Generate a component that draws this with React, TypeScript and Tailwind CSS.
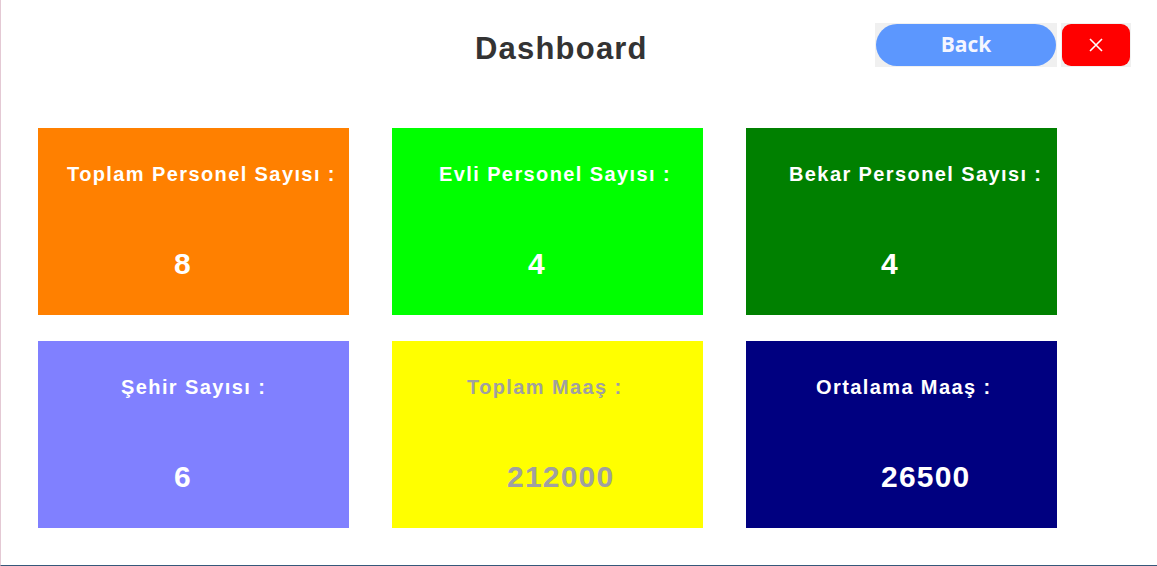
import React from "react";

type CardProps = {
  label: string;
  value: string;
  bg: string;
  text: string;
  labelPad: string;
  valuePad: string;
};

function StatCard({ label, value, bg, text, labelPad, valuePad }: CardProps) {
  return (
    <div className={`h-[187px] flex flex-col pt-[34px] ${bg} ${text}`}>
      <div className={`text-[20px] leading-[24px] font-bold tracking-[1.4px] whitespace-nowrap ${labelPad}`}>
        {label}
      </div>
      <div className={`mt-[60px] text-[30px] leading-[36px] font-bold tracking-[1.2px] ${valuePad}`}>
        {value}
      </div>
    </div>
  );
}

export default function App() {
  const cards: CardProps[] = [
    { label: "Toplam Personel Sayısı :", value: "8", bg: "bg-[#ff8000]", text: "text-white", labelPad: "pl-[29px]", valuePad: "pl-[136px]" },
    { label: "Evli Personel Sayısı :", value: "4", bg: "bg-[#00ff00]", text: "text-white", labelPad: "pl-[47px]", valuePad: "pl-[136px]" },
    { label: "Bekar Personel Sayısı :", value: "4", bg: "bg-[#008000]", text: "text-white", labelPad: "pl-[43px]", valuePad: "pl-[135px]" },
    { label: "Şehir Sayısı :", value: "6", bg: "bg-[#8080ff]", text: "text-white", labelPad: "pl-[83px]", valuePad: "pl-[136px]" },
    { label: "Toplam Maaş :", value: "212000", bg: "bg-[#ffff00]", text: "text-[#a0a0a0]", labelPad: "pl-[75px]", valuePad: "pl-[115px]" },
    { label: "Ortalama Maaş :", value: "26500", bg: "bg-[#000080]", text: "text-white", labelPad: "pl-[70px]", valuePad: "pl-[135px]" },
  ];

  return (
    <div
      className="w-[1157px] h-[566px] bg-white border-l border-l-[#e4c9d4] border-b border-b-[#36587a] flex flex-col overflow-hidden"
      style={{ fontFamily: '"Liberation Sans", Arial, sans-serif' }}
    >
      {/* header */}
      <div className="h-[128px] flex items-start">
        <h1 className="ml-[474px] mt-[31px] text-[31px] leading-[36px] font-bold text-[#333333] tracking-[1.2px]">
          Dashboard
        </h1>
        <div className="ml-auto mr-[26px] mt-[23px] flex gap-[4px]">
          <div className="bg-[#f0f0f0] p-[1px] w-[182px] h-[44px]">
            <button
              className="w-full h-full rounded-full bg-[#5c97fe] text-[#f4f6ff] text-[21px] font-bold flex items-center justify-center"
              style={{ fontFamily: '"Open Sans", "Noto Sans", sans-serif' }}
            >
              Back
            </button>
          </div>
          <div className="bg-[#f0f0f0] p-[1px] w-[70px] h-[44px]">
            <button className="w-full h-full rounded-[9px] bg-[#ff0000] flex items-center justify-center">
              <svg width="14" height="14" viewBox="0 0 14 14">
                <path d="M1 1 L13 13 M13 1 L1 13" stroke="#ffffff" strokeWidth="1.6" fill="none" />
              </svg>
            </button>
          </div>
        </div>
      </div>

      {/* cards */}
      <div className="ml-[37px] grid grid-cols-[311px_311px_311px] gap-x-[43px] gap-y-[26px] w-max">
        {cards.map((c) => (
          <StatCard key={c.label} {...c} />
        ))}
      </div>
    </div>
  );
}
